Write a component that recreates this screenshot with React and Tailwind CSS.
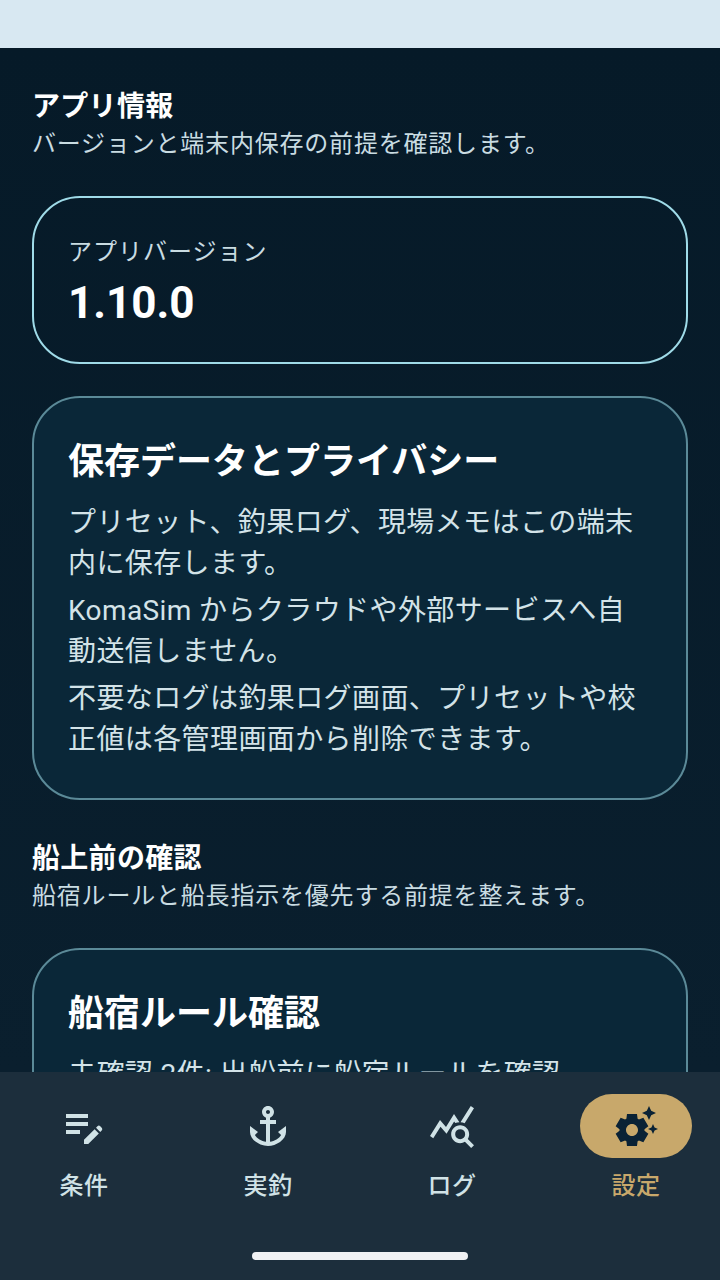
import React from 'react';
import { MdEditNote, MdAnchor, MdQueryStats, MdSettingsSuggest } from 'react-icons/md';

const navItems = [
    { label: '条件', Icon: MdEditNote },
    { label: '実釣', Icon: MdAnchor },
    { label: 'ログ', Icon: MdQueryStats },
    { label: '設定', Icon: MdSettingsSuggest, active: true },
];

function SectionHeader({ title, sub, className }) {
    return (
        <div className={className}>
            <h2 className="text-[28px] leading-[40px] font-bold tracking-[0.3px] text-white">{title}</h2>
            <p className="text-[24px] leading-[34px] tracking-[0.8px] text-[#c9dce2]">{sub}</p>
        </div>
    );
}

function InfoCard({ title, children, className }) {
    return (
        <div className={`rounded-[48px] border-2 border-[#5b8a98] bg-[#0a2738] px-[34px] pt-[36px] pb-[38px] ${className}`}>
            <h3 className="text-[36px] leading-[52px] font-bold text-white mt-[2px] mb-[15px]">{title}</h3>
            <div className="flex flex-col gap-[7px] text-[28px] leading-[40.5px] tracking-[0.4px] text-[#d3e3e8]">
                {children}
            </div>
        </div>
    );
}

export default function App() {
    return (
        <div className="w-[720px] h-[1280px] flex flex-col overflow-hidden bg-[#071926] font-['Roboto','Noto_Sans_CJK_JP',sans-serif]">
            <div className="h-[48px] shrink-0 bg-[#d8e8f2]"></div>

            <main className="flex-1 min-h-0 overflow-hidden bg-gradient-to-b from-[#061a28] to-[#0a1f2e] px-[32px] pt-[39px]">
                <SectionHeader title="アプリ情報" sub="バージョンと端末内保存の前提を確認します。" />

                <div className="mt-[35px] h-[168px] rounded-[48px] border-2 border-[#9fdbe8] pl-[34px] pt-[36px]">
                    <p className="text-[24px] leading-[36px] tracking-[1px] text-[#c9dce2]">アプリバージョン</p>
                    <p className="mt-[5px] text-[44px] leading-[56px] font-bold text-white">1.10.0</p>
                </div>

                <InfoCard title="保存データとプライバシー" className="mt-[32px]">
                    <p>プリセット、釣果ログ、現場メモはこの端末内に保存します。</p>
                    <p>KomaSim からクラウドや外部サービスへ自動送信しません。</p>
                    <p>不要なログは釣果ログ画面、プリセットや校正値は各管理画面から削除できます。</p>
                </InfoCard>

                <SectionHeader className="mt-[39px]" title="船上前の確認" sub="船宿ルールと船長指示を優先する前提を整えます。" />

                <InfoCard title="船宿ルール確認" className="mt-[35px]">
                    <p>未確認 2件: 出船前に船宿ルールを確認</p>
                </InfoCard>
            </main>

            <nav className="h-[208px] shrink-0 bg-[#1c2e3c] flex flex-col">
                <div className="flex justify-between px-[28px] pt-[22px]">
                    {navItems.map(({ label, Icon, active }) => (
                        <div key={label} className="flex flex-col items-center">
                            <div className={`w-[112px] h-[64px] rounded-full flex items-center justify-center ${active ? 'bg-[#c8a86b] text-[#0a2235]' : 'text-[#d0e2e6]'}`}>
                                <Icon size={48} />
                            </div>
                            <span className={`mt-[12px] text-[24px] leading-[32px] tracking-[0.4px] font-medium ${active ? 'text-[#c8a86b]' : 'text-[#d0e2e6]'}`}>
                                {label}
                            </span>
                        </div>
                    ))}
                </div>
                <div className="mt-auto mb-[20px] mx-auto w-[216px] h-[8px] rounded-full bg-[#f0f1f3]"></div>
            </nav>
        </div>
    );
}
